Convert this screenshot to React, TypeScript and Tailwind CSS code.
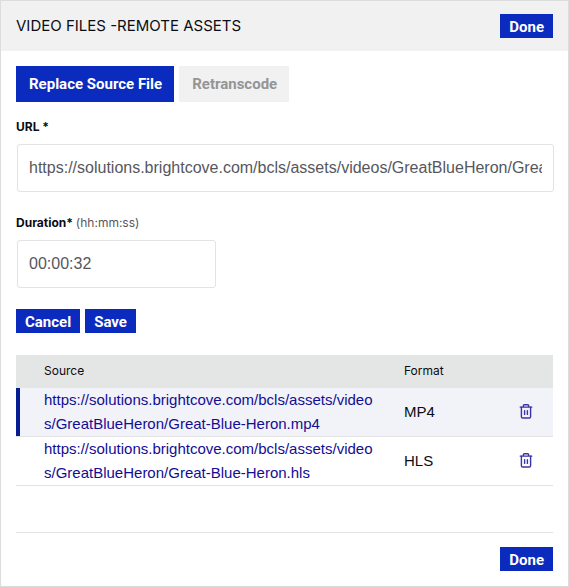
import { useState } from "react";

const assets = [
  {
    url: "https://solutions.brightcove.com/bcls/assets/videos/GreatBlueHeron/Great-Blue-Heron.mp4",
    format: "MP4",
    selected: true,
  },
  {
    url: "https://solutions.brightcove.com/bcls/assets/videos/GreatBlueHeron/Great-Blue-Heron.hls",
    format: "HLS",
    selected: false,
  },
];

function SmallButton({ children }: { children: string }) {
  return (
    <button
      type="button"
      className="flex h-6 items-center bg-[#0a2bbd] px-[9px] pt-[2px] font-[Roboto,sans-serif] text-[15px] leading-5 font-bold text-white"
    >
      {children}
    </button>
  );
}

function TrashIcon() {
  return (
    <svg
      className="size-4"
      viewBox="0 0 16 16"
      fill="none"
      stroke="#3a34a6"
      strokeWidth="1.4"
      strokeLinecap="round"
      strokeLinejoin="round"
      aria-hidden="true"
    >
      <path d="M2.2 3.1h11.6M5.4 3.1V1.5c0-.5.3-.8.8-.8h3.6c.5 0 .8.3.8.8v1.6" />
      <path d="M3.4 3.1v9.6c0 .8.5 1.3 1.3 1.3h6.6c.8 0 1.3-.5 1.3-1.3V3.1" />
      <path d="M6.6 6.6v3.8M9.4 6.6v3.8" />
    </svg>
  );
}

export default function App() {
  const [url, setUrl] = useState(assets[0].url);
  const [duration, setDuration] = useState("00:00:32");

  return (
    <main className="flex min-h-screen flex-col border border-[#dcdcdc] bg-white font-[Inter,sans-serif] text-[15px] text-[#0b0c14]">
      <header className="flex h-[50px] items-center justify-between bg-[#f1f1f1] px-[15px]">
        <h1 className="text-[15px] leading-6">VIDEO FILES -REMOTE ASSETS</h1>
        <SmallButton>Done</SmallButton>
      </header>

      <div className="px-[15px] pt-[15px]">
        <div className="flex gap-[5px]">
          <button
            type="button"
            className="h-9 bg-[#0a2bbd] pr-3 pl-[13px] font-[Roboto,sans-serif] text-[15px] font-bold text-white"
          >
            Replace Source File
          </button>
          <button
            type="button"
            disabled
            className="h-9 bg-[#f1f1f1] pr-3 pl-[13px] font-[Roboto,sans-serif] text-[15px] font-bold text-[#949596]"
          >
            Retranscode
          </button>
        </div>

        <label htmlFor="url" className="mt-[17px] block text-[12px] leading-4 font-bold">
          URL *
        </label>
        <input
          id="url"
          type="text"
          value={url}
          onChange={(e) => setUrl(e.target.value)}
          className="mt-[9px] ml-px block h-12 w-full rounded-[3px] border border-[#e3e3e3] px-[11px] font-['Liberation_Sans',sans-serif] text-[16px] text-[#56575d]"
        />

        <label htmlFor="duration" className="mt-[23px] block text-[12px] leading-4 font-bold">
          Duration* <span className="font-normal text-[#56575d]">(hh:mm:ss)</span>
        </label>
        <input
          id="duration"
          type="text"
          value={duration}
          onChange={(e) => setDuration(e.target.value)}
          className="mt-[9px] ml-px block h-12 w-[199px] rounded-[3px] border border-[#e3e3e3] px-[11px] font-['Liberation_Sans',sans-serif] text-[16px] text-[#56575d]"
        />

        <div className="mt-[21px] flex gap-[5px]">
          <SmallButton>Cancel</SmallButton>
          <SmallButton>Save</SmallButton>
        </div>

        <table className="mt-[22px] w-full table-fixed border-separate border-spacing-0 text-left">
          <thead>
            <tr className="h-[33px] bg-[#e4e6e5] text-[12px]">
              <th className="pt-0 pb-[2px] pl-7 font-normal">Source</th>
              <th className="w-[95px] pt-0 pb-[2px] font-normal">Format</th>
              <th className="w-[54px]" aria-label="Actions" />
            </tr>
          </thead>
          <tbody className="font-['Liberation_Sans',sans-serif]">
            {assets.map((asset) => (
              <tr key={asset.url} className={asset.selected ? "bg-[#f2f3f9]" : "bg-white"}>
                <td
                  className={
                    asset.selected
                      ? "border-b border-[#e3e3e6] p-0 shadow-[inset_4px_0_0_#051e92]"
                      : "border-b border-[#e3e3e6] p-0"
                  }
                >
                  <a href={asset.url} className="block pr-6 pl-7 leading-6 break-all text-[#130d93]">
                    {asset.url}
                  </a>
                </td>
                <td className="border-b border-[#e3e3e6] p-0">{asset.format}</td>
                <td className="border-b border-[#e3e3e6] p-0">
                  <button type="button" aria-label={"Delete " + asset.format} className="mx-auto block">
                    <TrashIcon />
                  </button>
                </td>
              </tr>
            ))}
          </tbody>
        </table>
      </div>

      <footer className="mx-[15px] mt-auto flex justify-end border-t border-[#e3e3e3] pt-[14px] pb-[15px]">
        <SmallButton>Done</SmallButton>
      </footer>
    </main>
  );
}
